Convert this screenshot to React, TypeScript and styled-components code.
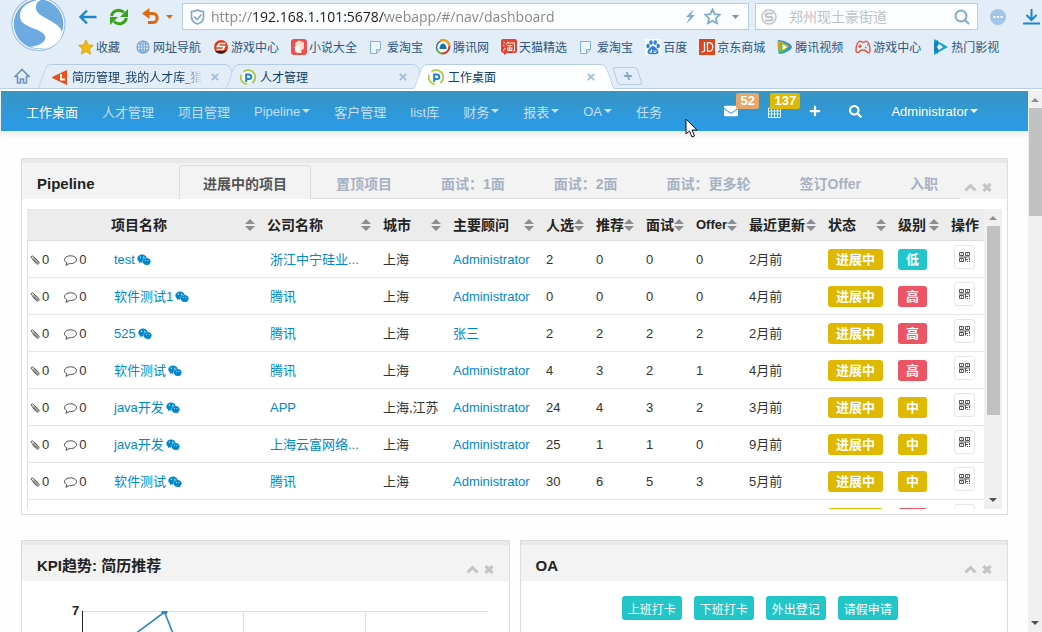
import React from "react";
import styled, { createGlobalStyle } from "styled-components";
import { FaEnvelope, FaPlus, FaSearch, FaWeixin } from "react-icons/fa";

const sans = `"Liberation Sans", "Noto Sans CJK SC", sans-serif`;
const chromeFont = `"Open Sans", "Noto Sans CJK SC", sans-serif`;

const GlobalStyle = createGlobalStyle`
  *, *::before, *::after { box-sizing: border-box; }
  html, body { margin: 0; padding: 0; }
  body { font-family: ${sans}; font-size: 13px; color: #333; background: #fefefe; overflow: hidden; }
  button, input { font: inherit; color: inherit; margin: 0; padding: 0; border: 0; background: none; }
  a { text-decoration: none; color: inherit; }
  svg { display: block; flex: none; }
`;

const Window = styled.div`
  display: flex;
  flex-direction: column;
  height: 100vh;
  overflow: hidden;
`;

/* ---------- browser frame ---------- */

const Chrome = styled.header`
  flex: none;
  background: #e3edf8;
  font-family: ${chromeFont};
  font-size: 12px;
  color: #2d567f;
`;

const ChromeTop = styled.div`
  display: grid;
  grid-template-columns: 78px minmax(0, 1fr);
  height: 62px;
`;

const LogoCell = styled.div`
  display: flex;
  align-items: flex-end;
  padding: 0 0 10px 11px;
  overflow: hidden;
`;

const ChromeBars = styled.div`
  min-width: 0;
`;

const Toolbar = styled.div`
  display: flex;
  align-items: center;
  height: 33px;
`;

const ToolButton = styled.button<{ $gap?: number }>`
  display: flex;
  margin-right: ${(p) => p.$gap ?? 0}px;
`;

const Field = styled.label<{ $width?: number }>`
  display: flex;
  align-items: center;
  flex: ${(p) => (p.$width ? `0 1 ${p.$width}px` : "1 1 0")};
  min-width: 0;
  height: 27px;
  padding: 0 7px 0 ${(p) => (p.$width ? 5 : 7)}px;
  margin-left: ${(p) => (p.$width ? 6 : 0)}px;
  border: 1px solid #b7cfe5;
  background: #fcfdfe;
`;

const UrlInput = styled.input`
  flex: 1;
  min-width: 0;
  height: 25px;
  margin-left: 6px;
  outline: none;
  font-size: 14px;
  color: #858585;
  background: linear-gradient(90deg, #858585 41px, #1c1c1c 41px, #1c1c1c 174px, #858585 174px);
  -webkit-background-clip: text;
  background-clip: text;
  -webkit-text-fill-color: transparent;
`;

const SearchInput = styled.input`
  flex: 1;
  min-width: 0;
  margin-left: 12px;
  outline: none;
  font-size: 14px;
  &::placeholder { color: #bcc2c8; opacity: 1; }
`;

const FieldActions = styled.span`
  display: flex;
  align-items: center;
  gap: 8px;
`;

const Extras = styled.div`
  display: flex;
  align-items: center;
  gap: 17px;
  padding: 0 2px 0 12px;
`;

const Bookmarks = styled.nav`
  display: flex;
  align-items: center;
  gap: 12px;
  height: 28px;
  overflow: hidden;
`;

const Bookmark = styled.a`
  display: flex;
  align-items: center;
  gap: 2px;
  flex: none;
  white-space: nowrap;
  &:first-child { margin-right: 3px; }
`;

const TabStrip = styled.div`
  display: flex;
  align-items: flex-end;
  height: 29px;
  padding-left: 14px;
  border-bottom: 2px solid #fdfeff;
  box-shadow: inset 0 -1px 0 #b9cfe6;
`;

const HomeButton = styled.button`
  display: flex;
  align-self: center;
  margin-right: 12px;
`;

const BrowserTab = styled.div<{ $active?: boolean }>`
  position: relative;
  z-index: ${(p) => (p.$active ? 1 : 0)};
  display: flex;
  align-items: center;
  width: 188px;
  height: 25px;
  padding: 0 11px 0 10px;
  color: #143d68;
  &::before,
  &::after {
    content: "";
    position: absolute;
    z-index: -1;
    top: 0;
    bottom: 0;
    border: 1px solid #b3cce4;
    background: ${(p) => (p.$active ? "#fdfeff" : "#e3edf8")};
    border-bottom-color: ${(p) => (p.$active ? "#fdfeff" : "#b9cfe6")};
  }
  &::before {
    left: 0;
    right: 40%;
    border-right: 0;
    border-radius: 5px 0 0 0;
    transform: skewX(-20deg);
  }
  &::after {
    left: 40%;
    right: -4px;
    border-left: 0;
    border-radius: 0 5px 0 0;
    transform: skewX(20deg);
  }
`;

const TabLabel = styled.span<{ $fade?: boolean }>`
  flex: 1;
  margin: 0 9px 0 4px;
  overflow: hidden;
  white-space: nowrap;
  ${(p) => p.$fade && "mask-image: linear-gradient(90deg, #000 85%, transparent);"}
`;

const NewTab = styled.button`
  display: flex;
  align-items: center;
  justify-content: center;
  align-self: center;
  width: 25px;
  height: 18px;
  margin-left: 9px;
  border: 1px solid #b3cce4;
  border-radius: 3px;
  transform: skewX(18deg);
`;

/* ---------- page ---------- */

const Viewport = styled.div`
  display: flex;
  flex: 1;
  min-height: 0;
`;

const Page = styled.main`
  flex: 1;
  min-width: 0;
  padding-left: 1px;
  overflow: hidden;
`;

const NavBar = styled.nav`
  display: flex;
  align-items: center;
  height: 40px;
  padding: 0 50px 0 13px;
  color: #fff;
  background: linear-gradient(#3795c1, #2c9ae3 80%);
  box-shadow: 0 2px 8px rgba(0, 0, 0, 0.12);
`;

const NavLink = styled.a<{ $active?: boolean }>`
  display: flex;
  align-items: center;
  gap: 2px;
  padding: 0 12px;
  white-space: nowrap;
  color: ${(p) => (p.$active ? "#fff" : "#c3dff3")};
`;

const NavTools = styled.div`
  display: flex;
  align-items: center;
  margin-left: auto;
`;

const NavTool = styled.button<{ $gap: number }>`
  position: relative;
  display: flex;
  align-items: center;
  margin-right: ${(p) => p.$gap}px;
`;

const Badge = styled.span<{ $color: string; $left: number }>`
  position: absolute;
  left: ${(p) => p.$left}px;
  bottom: 9px;
  padding: 0 4px;
  border-radius: 2px;
  font-size: 13px;
  font-weight: bold;
  line-height: 16px;
  color: #fff;
  background: ${(p) => p.$color};
`;

const UserMenu = styled.button`
  display: flex;
  align-items: center;
  gap: 2px;
`;

const Content = styled.div`
  display: grid;
  grid-template-columns: minmax(0, 1fr) minmax(0, 1fr);
  gap: 25px 10px;
  padding: 27px 20px 20px;
`;

const Widget = styled.section<{ $wide?: boolean }>`
  grid-column: ${(p) => (p.$wide ? "1 / -1" : "auto")};
  border: 1px solid #dcdddd;
  background: #fff;
`;

const WidgetHead = styled.div`
  display: flex;
  align-items: flex-end;
  height: 40px;
  padding: 0 15px;
  border-top: 4px solid #e7eaeb;
  background: #f3f3f3;
`;

const WidgetTitle = styled.h2<{ $width?: number }>`
  flex: ${(p) => (p.$width ? `0 0 ${p.$width}px` : "1")};
  margin: 0;
  padding-bottom: 5px;
  font-size: 15px;
  line-height: 20px;
  font-weight: bold;
  color: #222;
`;

const WidgetTools = styled.div`
  display: flex;
  align-items: center;
  gap: 5px;
  padding-bottom: 7px;
  color: #c4c4c4;
`;

const StageTabs = styled.div`
  display: flex;
  flex: 1;
  gap: 1px;
  min-width: 0;
  height: 34px;
  margin-right: 5px;
  box-shadow: inset 0 -1px 0 #dcdddd;
`;

const StageTab = styled.button<{ $active?: boolean }>`
  flex: none;
  padding: 0 23px;
  border: 1px solid ${(p) => (p.$active ? "#dcdddd" : "transparent")};
  border-bottom: 0;
  border-radius: 4px 4px 0 0;
  font-size: 14px;
  font-weight: bold;
  white-space: nowrap;
  color: ${(p) => (p.$active ? "#555" : "#a7b1c2")};
  background: ${(p) => (p.$active ? "#f3f3f3" : "none")};
`;

const TableArea = styled.div`
  display: flex;
  height: 300px;
  margin: 10px 5px 5px;
  overflow: hidden;
`;

const TableScroll = styled.div`
  flex: 1;
  min-width: 0;
  overflow: hidden;
`;

const Table = styled.table`
  width: 100%;
  table-layout: fixed;
  border-collapse: separate;
  border-spacing: 0;
  box-shadow: inset 1px 0 0 #dfdfdf;
`;

const Th = styled.th`
  height: 32px;
  padding: 0 7px 0 5px;
  border-top: 1px solid #e4e4e4;
  border-bottom: 1px solid #dcdcdc;
  background: #ececec;
  color: #222;
  text-align: left;
  white-space: nowrap;
`;

const ThInner = styled.span<{ $small?: boolean }>`
  display: flex;
  align-items: center;
  justify-content: space-between;
  font-size: ${(p) => (p.$small ? 13 : 14)}px;
  line-height: 18px;
`;

const Td = styled.td<{ $inset?: boolean }>`
  height: 37px;
  padding: 2px 0 0 ${(p) => (p.$inset ? 8 : 5)}px;
  border-bottom: 1px solid #e5e5e5;
  white-space: nowrap;
  line-height: 18px;
`;

const TagTd = styled(Td)`
  padding: 0 0 0 5px;
`;

const ActionTd = styled(Td)`
  padding: 0 0 4px 8px;
`;

const CellLink = styled.a`
  display: inline-flex;
  align-items: center;
  gap: 2px;
  color: #0088cc;
`;

const Counters = styled.div`
  display: flex;
  align-items: center;
  gap: 15px;
  margin-left: -2px;
`;

const Counter = styled.span`
  display: flex;
  align-items: center;
  gap: 2px;
`;

const Tag = styled.span<{ $color: string }>`
  display: inline-block;
  padding: 0 8px;
  border-radius: 3px;
  font-weight: bold;
  line-height: 21px;
  vertical-align: middle;
  color: #fff;
  background: ${(p) => p.$color};
`;

const QrButton = styled.button`
  display: flex;
  align-items: center;
  justify-content: center;
  width: 21px;
  height: 24px;
  border: 1px solid #e4e6e7;
  border-radius: 3px;
  background: #fff;
`;

const Track = styled.div<{ $width: number }>`
  display: flex;
  flex-direction: column;
  align-items: center;
  flex: 0 0 ${(p) => p.$width}px;
  padding: 7px 0;
  background: #f0f0f0;
`;

const Thumb = styled.div<{ $height: number }>`
  width: 13px;
  height: ${(p) => p.$height}px;
  margin: 6px 0 auto;
  background: #c1c1c1;
`;

const ChartBody = styled.div`
  height: 200px;
  overflow: hidden;
`;

const ButtonRow = styled.div`
  display: flex;
  justify-content: center;
  gap: 12px;
  padding: 15px 8px 15px 0;
`;

const PunchButton = styled.button`
  height: 24px;
  padding: 0 6px;
  border-radius: 3px;
  font-size: 12px;
  color: #fff;
  background: #23c6c8;
`;

const Pointer = styled.svg`
  position: absolute;
  left: 685px;
  top: 118px;
  z-index: 5;
`;

/* ---------- icons ---------- */

const Logo = () => (
  <svg width="56" height="56" viewBox="0 0 56 56">
    <circle cx="27.500" cy="28" r="26.500" fill="#fff" stroke="#9fc3e3" strokeWidth="1.200" />
    <circle cx="27.500" cy="28" r="24.800" fill="#6eaae2" />
    <path
      d="M33 3C20 4 8 10 9 21c1 11 22 11 25 19 2 6-6 10-15 11 18 4 30-2 32-13 1-12-25-16-26-25-1-6 3-9 8-10z"
      fill="#fff"
    />
  </svg>
);

const ArrowUp = () => (
  <svg width="8" height="4" viewBox="0 0 8 4"><path d="M0 4 4 0l4 4z" fill="#8d8d8d" /></svg>
);
const ArrowDown = () => (
  <svg width="8" height="4" viewBox="0 0 8 4"><path d="M0 0h8L4 4z" fill="#505050" /></svg>
);
const Caret = () => (
  <svg width="8" height="4" viewBox="0 0 8 4"><path d="M0 0h8L4 4z" fill="currentColor" /></svg>
);
const SortIcon = () => (
  <svg width="10" height="12" viewBox="0 0 10 12">
    <path d="M0 5 5 0l5 5zM0 7h10l-5 5z" fill="#8b8d90" />
  </svg>
);
const CloseX = () => (
  <svg width="8" height="8" viewBox="0 0 8 8">
    <path d="M.8.8l6.400 6.400M7.200.8.8 7.200" stroke="#9fbfdd" strokeWidth="1.800" />
  </svg>
);
const GridIcon = () => (
  <svg width="13" height="13" viewBox="0 0 13 13">
    <path d="M.5 3h12v9.500H.5zM.5 6h12M.5 9h12M3.500 3v9.500M6.500 3v9.500M9.500 3v9.500M3.500 0v3M9.500 0v3" fill="none" stroke="#e4f1fa" />
  </svg>
);
const CollapseIcon = () => (
  <svg width="13" height="9" viewBox="0 0 13 9">
    <path d="M1.500 7.500l5-5 5 5" fill="none" stroke="currentColor" strokeWidth="3" />
  </svg>
);
const RemoveIcon = () => (
  <svg width="10" height="9" viewBox="0 0 10 9">
    <path d="M1.500 1l7 7M8.500 1l-7 7" fill="none" stroke="currentColor" strokeWidth="3.200" />
  </svg>
);
const ClipIcon = () => (
  <svg width="10" height="10" viewBox="0 0 10 10" fill="none" stroke="#555" strokeLinecap="round">
    <path d="M3.500 3l4 4c.8.8 0 1.600-.8.8L1.500 3C.2 1.700 2 .2 3.200 1.300l5.300 5C10 8 8.300 10.200 6.500 8.700L2.800 5" />
  </svg>
);
const BubbleIcon = () => (
  <svg width="13" height="11" viewBox="0 0 13 11" fill="none" stroke="#444">
    <path d="M6.500.8c3.300 0 6 1.700 6 3.900s-2.700 3.900-6 3.900l-1.200-.1C4.300 9.500 3 10 1.800 10.200c.6-.6 1-1.300 1.100-2.300C1.400 7.200.5 6 .5 4.700.5 2.500 3.200.8 6.500.8z" />
  </svg>
);
const QrIcon = () => (
  <svg width="11" height="10" viewBox="0 0 11 10" fill="none" stroke="#555">
    <path d="M.5.5h4v3h-4zM6.500.5h4v3h-4zM.5 6.500h4v3h-4zM0 5h11M2 2h1M8 2h1M2 8h1M6.500 5v4.500M6 7.500h3M10.500 6v2M8 9.500h1M10 9.500h1" />
  </svg>
);

const icon16 = { width: 16, height: 16, viewBox: "0 0 16 16" };

const StarIcon = () => (
  <svg {...icon16}>
    <path d="M8 1l2.200 4.800 5.100.6-3.800 3.500 1.100 5.200L8 12.500l-4.600 2.600 1.100-5.200L.7 6.400l5.100-.6z" fill="#f0b90e" stroke="#d79d0c" strokeWidth=".8" />
  </svg>
);
const GlobeIcon = () => (
  <svg {...icon16} fill="none" stroke="#7ba4cc" strokeWidth="1.200">
    <circle cx="8" cy="8" r="6" />
    <ellipse cx="8" cy="8" rx="2.800" ry="6" />
    <path d="M8 2v12M2 8h12M3 5h10M3 11h10" />
  </svg>
);
const GameIcon = () => (
  <svg {...icon16}>
    <circle cx="8" cy="8" r="7" fill="#e23c1c" />
    <path d="M2 12c2 3 9 4 12-1l-4 1z" fill="#222" />
    <path d="M12.500 4.500H6.500L4.500 7.500h7l-1.500 3H3.500" fill="none" stroke="#fff" strokeWidth="1.700" />
  </svg>
);
const NovelIcon = () => (
  <svg {...icon16}>
    <rect x="0" y="0" width="16" height="16" rx="3" fill="#ee4f50" />
    <path d="M4 4l4-2.500 5 2v6l-3 2 1 2.500H6L4 12l1-2z" fill="#fbe3cf" />
    <path d="M3.500 7.500l5-1V13h-4z" fill="#fff" />
  </svg>
);
const DocIcon = () => (
  <svg {...icon16}>
    <path d="M1.500 2.500h10v8l-4 4h-6zM11.500 10.500h-4v4" fill="#edf5fc" stroke="#7fb2de" />
  </svg>
);
const TencentIcon = () => (
  <svg {...icon16} fill="none">
    <circle cx="8" cy="8" r="6" fill="#f4f9fc" />
    <path d="M2.500 11.500A6.500 6.500 0 0 1 6 2" stroke="#3a6f9c" strokeWidth="1.500" />
    <path d="M5 1.800a6.500 6.500 0 0 1 9.500 5" stroke="#e8a01c" strokeWidth="2.400" />
    <path d="M14.500 7c0 5-4 8-8 7.300" stroke="#cf3b2b" strokeWidth="2" />
    <path d="M2 10.500c1 2.500 3 4 5.500 4" stroke="#6aa83b" strokeWidth="2" />
    <path d="M8 4.500c2 0 3.500 3 3.500 5.500h-7c0-2.500 1.500-5.500 3.500-5.500z" fill="#1b6fae" />
  </svg>
);
const TaoIcon = () => (
  <svg {...icon16}>
    <path d="M2 0h12a2 2 0 0 1 2 2v10a2 2 0 0 1-2 2H6l-3 2v-2a3 3 0 0 1-3-2V2a2 2 0 0 1 2-2z" fill="#e8412f" />
    <path d="M2.500 3l1.500 1M2 6l1.500 1M2.200 12l2-3M7 2.500 5.500 5.500M6.500 4h7v8h-1.500M6.500 6.500h5M6 9h5.500M8.800 6.500v5M6.800 9.500v2h4v-2" fill="none" stroke="#fff" />
  </svg>
);
const PawIcon = () => (
  <svg {...icon16}>
    <rect width="16" height="16" fill="#f8fbfe" />
    <g fill="#2a80d4">
      <ellipse cx="3" cy="7" rx="1.700" ry="2.200" />
      <ellipse cx="6" cy="3.500" rx="1.700" ry="2.300" />
      <ellipse cx="10.200" cy="3.500" rx="1.700" ry="2.300" />
      <ellipse cx="13.200" cy="7" rx="1.700" ry="2.200" />
      <path d="M8 7c2 0 5.500 4 5.500 6.300 0 2.200-3 2-5.500 2s-5.500.2-5.500-2C2.500 11 6 7 8 7z" />
    </g>
    <path d="M6.500 10v3.500H5V12h1.500M9 11v2.500h2V11" fill="none" stroke="#f8fbfe" strokeWidth=".8" />
  </svg>
);
const JdIcon = () => (
  <svg {...icon16}>
    <rect width="16" height="16" fill="#e2431e" />
    <path d="M5.500 3v8c0 1.500-1 2-3 1.700M8.500 3.600v8.800h1.500c5 0 5-8.800 0-8.800z" fill="none" stroke="#fff" strokeWidth="1.300" />
  </svg>
);
const VideoIcon = () => (
  <svg {...icon16}>
    <path d="M1 1c5-.5 14 4 14 7s-9 7.500-13 7C.5 12 .5 4 1 1z" fill="#2b95dc" />
    <path d="M1 2c3 0 9 3 11 5.500C9 11 5 13 2 13 1 10 .5 5 1 2z" fill="#f29c1f" />
    <path d="M3 3c3 1 7 3 8.500 5C9 11 6 13 3.500 14 2 11 2 6 3 3z" fill="#74bd2b" />
    <path d="M5.500 5l5 3-5 3z" fill="#fff" />
  </svg>
);
const PadIcon = () => (
  <svg {...icon16} fill="none" stroke="#e5563f" strokeWidth="1.400">
    <path d="M4 2.500c1.500-1 2 .7 4 .7s2.500-1.700 4-.7c2 1.300 3 6 3 9s-2.500 2.500-4 .5c-1-1.300-5-1.300-6 0-1.500 2-4 2.500-4-.5s1-7.700 3-9z" />
    <path d="M5 5.500v3.500M3.300 7.200h3.400M10 8.500h1.500M12 6h1.200" />
  </svg>
);
const FilmIcon = () => (
  <svg {...icon16}>
    <path d="M1 0l14 8-14 8z" fill="#18a3d0" />
    <path d="M1 4v8l4 3V1z" fill="#1583bd" />
    <path d="M6 5l4 3-4 3-2-3z" fill="#fff" />
  </svg>
);
const LiepinIcon = () => (
  <svg {...icon16}>
    <path d="M15 1v15L1 9.500C0 9 0 8 1 7.500z" fill="#e8501c" />
    <path d="M9 5v5.500h4" fill="none" stroke="#fff" strokeWidth="1.800" />
  </svg>
);
const PIcon = () => (
  <svg {...icon16} fill="none">
    <circle cx="8" cy="8" r="5.500" fill="#fff" />
    <path d="M7 15.200A7 7 0 0 1 1 6" stroke="#a8cd34" strokeWidth="1.600" />
    <path d="M3.500 2.500a7.200 7.200 0 0 1 9 11.500" stroke="#a3c72f" strokeWidth="1.600" />
    <path d="M6.200 13V5.500H9a2.300 2.300 0 0 1 0 4.600H6.500" stroke="#1d84c9" strokeWidth="2" />
  </svg>
);

/* ---------- data ---------- */

const bookmarks: [React.ComponentType, string][] = [
  [StarIcon, "收藏"],
  [GlobeIcon, "网址导航"],
  [GameIcon, "游戏中心"],
  [NovelIcon, "小说大全"],
  [DocIcon, "爱淘宝"],
  [TencentIcon, "腾讯网"],
  [TaoIcon, "天猫精选"],
  [DocIcon, "爱淘宝"],
  [PawIcon, "百度"],
  [JdIcon, "京东商城"],
  [VideoIcon, "腾讯视频"],
  [PadIcon, "游戏中心"],
  [FilmIcon, "热门影视"],
];

const navItems: { label: string; menu?: boolean }[] = [
  { label: "工作桌面" },
  { label: "人才管理" },
  { label: "项目管理" },
  { label: "Pipeline", menu: true },
  { label: "客户管理" },
  { label: "list库" },
  { label: "财务", menu: true },
  { label: "报表", menu: true },
  { label: "OA", menu: true },
  { label: "任务" },
];

const stages = ["进展中的项目", "置顶项目", "面试：1面", "面试：2面", "面试：更多轮", "签订Offer", "入职"];

const columns: { label: string; width?: number; sort?: boolean }[] = [
  { label: "", width: 79 },
  { label: "项目名称", sort: true },
  { label: "公司名称", width: 116, sort: true },
  { label: "城市", width: 70, sort: true },
  { label: "主要顾问", width: 93, sort: true },
  { label: "人选", width: 50, sort: true },
  { label: "推荐", width: 50, sort: true },
  { label: "面试", width: 50, sort: true },
  { label: "Offer", width: 53, sort: true },
  { label: "最近更新", width: 79, sort: true },
  { label: "状态", width: 70, sort: true },
  { label: "级别", width: 53, sort: true },
  { label: "操作", width: 38 },
];

const levelColor: Record<string, string> = { 低: "#23c6c8", 中: "#deb900", 高: "#ed5565" };

const rows = [
  ["test", "浙江中宁硅业...", "上海", "Administrator", "2", "0", "0", "0", "2月前", "低"],
  ["软件测试1", "腾讯", "上海", "Administrator", "0", "0", "0", "0", "4月前", "高"],
  ["525", "腾讯", "上海", "张三", "2", "2", "2", "2", "2月前", "高"],
  ["软件测试", "腾讯", "上海", "Administrator", "4", "3", "2", "1", "4月前", "高"],
  ["java开发", "APP", "上海,江苏", "Administrator", "24", "4", "3", "2", "3月前", "中"],
  ["java开发", "上海云富网络...", "上海", "Administrator", "25", "1", "1", "0", "9月前", "中"],
  ["软件测试", "腾讯", "上海", "Administrator", "30", "6", "5", "3", "5月前", "中"],
  ["", "", "", "", "", "", "", "", "", "高"],
];

const Controls = () => (
  <WidgetTools>
    <ToolButton aria-label="收起"><CollapseIcon /></ToolButton>
    <ToolButton aria-label="关闭"><RemoveIcon /></ToolButton>
  </WidgetTools>
);

const ProjectTable = () => (
  <Table>
    <colgroup>
      {columns.map((c, i) => (
        <col key={i} width={c.width} />
      ))}
    </colgroup>
    <thead>
      <tr>
        {columns.map((c, i) => (
          <Th key={i}>
            <ThInner $small={c.label === "Offer"}>
              {c.label}
              {c.sort && <SortIcon />}
            </ThInner>
          </Th>
        ))}
      </tr>
    </thead>
    <tbody>
      {rows.map(([name, company, city, owner, n1, n2, n3, n4, updated, level], i) => (
        <tr key={i}>
          <Td>
            {name && (
              <Counters>
                <Counter><ClipIcon />0</Counter>
                <Counter><BubbleIcon />0</Counter>
              </Counters>
            )}
          </Td>
          <Td $inset>{name && <CellLink href="#">{name}<FaWeixin size={14} /></CellLink>}</Td>
          <Td $inset>{company && <CellLink href="#">{company}</CellLink>}</Td>
          <Td>{city}</Td>
          <Td>{owner && <CellLink href="#">{owner}</CellLink>}</Td>
          <Td>{n1}</Td>
          <Td>{n2}</Td>
          <Td>{n3}</Td>
          <Td>{n4}</Td>
          <Td>{updated}</Td>
          <TagTd><Tag $color="#deb900">进展中</Tag></TagTd>
          <TagTd><Tag $color={levelColor[level]}>{level}</Tag></TagTd>
          <ActionTd><QrButton aria-label="二维码"><QrIcon /></QrButton></ActionTd>
        </tr>
      ))}
    </tbody>
  </Table>
);

const BrowserFrame = () => (
  <Chrome>
    <ChromeTop>
      <LogoCell><Logo /></LogoCell>
      <ChromeBars>
        <Toolbar>
          <ToolButton aria-label="后退" $gap={11}>
            <svg width="19" height="16" viewBox="0 0 19 16"><path d="M18.500 8H2.500M9 1.500 2.500 8 9 14.500" fill="none" stroke="#1c86cc" strokeWidth="2.400" /></svg>
          </ToolButton>
          <ToolButton aria-label="刷新" $gap={12}>
            <svg width="22" height="18" viewBox="0 0 22 18">
              <path d="M3.500 8C4.500 3 11 0 16 4.500M18.500 10C17.500 15 11 18 6 13.500" fill="none" stroke="#36a317" strokeWidth="3" />
              <path d="M20 1v8h-8zM2 17V9h8z" fill="#36a317" />
            </svg>
          </ToolButton>
          <ToolButton aria-label="撤销" $gap={6}>
            <svg width="18" height="18" viewBox="0 0 18 18">
              <path d="M4 5.500h7c5.500 0 5.500 9 0 9H6" fill="none" stroke="#dd6a10" strokeWidth="3" />
              <path d="M7.500 0v11L0 5.500z" fill="#dd6a10" />
            </svg>
          </ToolButton>
          <ToolButton aria-label="更多" $gap={9}>
            <svg width="7" height="4" viewBox="0 0 7 4"><path d="M0 0h7L3.500 4z" fill="#dd6a10" /></svg>
          </ToolButton>
          <Field>
            <svg width="15" height="16" viewBox="0 0 15 16" fill="none" stroke="#80a9cd" strokeWidth="1.700">
              <path d="M7.500 1c2 1.500 4 1.500 6 1.500V8c0 4-3 6-6 7-3-1-6-3-6-7V2.500c2 0 4 0 6-1.500z" />
              <path d="M4 7.500 7 10.500 11.500 5.500" />
            </svg>
            <UrlInput aria-label="网址" defaultValue="http://192.168.1.101:5678/webapp/#/nav/dashboard" />
            <FieldActions>
              <svg width="11" height="15" viewBox="0 0 11 15"><path d="M9 0 1 8h4l-4 7 9-9H6z" fill="#80a9cd" /></svg>
              <svg width="17" height="17" viewBox="0 0 17 17"><path d="M8.500 1.500l2.200 4.700 5 .6-3.700 3.400 1 5-4.500-2.500L4 15.200l1-5L1.300 6.800l5-.6z" fill="none" stroke="#80a9cd" strokeWidth="1.800" /></svg>
              <svg width="12" height="4" viewBox="0 0 12 4"><path d="M3 0h7L6.500 4z" fill="#7096bb" /></svg>
            </FieldActions>
          </Field>
          <Field $width={223}>
            <svg {...icon16} fill="none" stroke="#c1c4c7">
              <circle cx="8" cy="8" r="7" strokeWidth="1.500" />
              <path d="M12 4.500H6.500C4 4.500 4 8 6.500 8h3c2.500 0 2.500 3.500 0 3.500H4" strokeWidth="2" />
            </svg>
            <SearchInput aria-label="搜索" placeholder="郑州现土豪街道" />
            <svg width="16" height="16" viewBox="0 0 16 16" fill="none" stroke="#80a9cd" strokeWidth="2"><circle cx="7" cy="7" r="5.500" /><path d="M11 11l4 4" /></svg>
          </Field>
          <Extras>
            <ToolButton aria-label="扩展">
              <svg {...icon16}><circle cx="8" cy="8" r="8" fill="#a3c4e4" /><path d="M3.500 7h2v2h-2zM7 7h2v2H7zM10.500 7h2v2h-2z" fill="#fff" /></svg>
            </ToolButton>
            <ToolButton aria-label="下载">
              <svg width="17" height="17" viewBox="0 0 17 17"><path d="M8.500 1v11M3.500 7l5 5 5-5M0 15.500h17" fill="none" stroke="#1c86cc" strokeWidth="2" /></svg>
            </ToolButton>
          </Extras>
        </Toolbar>
        <Bookmarks>
          {bookmarks.map(([Icon, label], i) => (
            <Bookmark href="#" key={i}><Icon />{label}</Bookmark>
          ))}
        </Bookmarks>
      </ChromeBars>
    </ChromeTop>
    <TabStrip>
      <HomeButton aria-label="主页">
        <svg width="16" height="16" viewBox="0 0 16 16" fill="none" stroke="#7095b9" strokeWidth="1.600"><path d="M1 8.500 8 1.500l7 7h-2.500V15H9.500v-4h-3v4h-3V8.500z" /></svg>
      </HomeButton>
      <BrowserTab><LiepinIcon /><TabLabel $fade>简历管理_我的人才库_猎</TabLabel><ToolButton aria-label="关闭标签"><CloseX /></ToolButton></BrowserTab>
      <BrowserTab><PIcon /><TabLabel>人才管理</TabLabel><ToolButton aria-label="关闭标签"><CloseX /></ToolButton></BrowserTab>
      <BrowserTab $active><PIcon /><TabLabel>工作桌面</TabLabel><ToolButton aria-label="关闭标签"><CloseX /></ToolButton></BrowserTab>
      <NewTab aria-label="新标签">
        <svg width="8" height="8" viewBox="0 0 8 8"><path d="M4 0v8M0 4h8" stroke="#80a9cd" strokeWidth="2" /></svg>
      </NewTab>
    </TabStrip>
  </Chrome>
);

export default function App() {
  return (
    <Window>
      <GlobalStyle />
      <BrowserFrame />
      <Viewport>
        <Page>
          <NavBar>
            {navItems.map((n, i) => (
              <NavLink href="#" key={n.label} $active={i === 0}>
                {n.label}
                {n.menu && <Caret />}
              </NavLink>
            ))}
            <NavTools>
              <NavTool aria-label="邮件" $gap={30}><FaEnvelope size={14} /><Badge $color="#e8a768" $left={12}>52</Badge></NavTool>
              <NavTool aria-label="日程" $gap={28}><GridIcon /><Badge $color="#deb900" $left={2}>137</Badge></NavTool>
              <NavTool aria-label="新建" $gap={28}><FaPlus size={12} /></NavTool>
              <NavTool aria-label="搜索" $gap={29}><FaSearch size={13} /></NavTool>
              <UserMenu>Administrator<Caret /></UserMenu>
            </NavTools>
          </NavBar>
          <Content>
            <Widget $wide>
              <WidgetHead>
                <WidgetTitle $width={142}>Pipeline</WidgetTitle>
                <StageTabs>
                  {stages.map((s, i) => (
                    <StageTab key={s} $active={i === 0}>{s}</StageTab>
                  ))}
                </StageTabs>
                <Controls />
              </WidgetHead>
              <TableArea>
                <TableScroll><ProjectTable /></TableScroll>
                <Track $width={18}><ArrowUp /><Thumb $height={189} /><ArrowDown /></Track>
              </TableArea>
            </Widget>
            <Widget>
              <WidgetHead>
                <WidgetTitle>KPI趋势: 简历推荐</WidgetTitle>
                <Controls />
              </WidgetHead>
              <ChartBody>
                <svg width="487" height="200" viewBox="0 0 487 200">
                  <path d="M61 30.500h405M221.500 30v170M343.500 30v170" stroke="#e0e0e0" fill="none" />
                  <path d="M60.500 30v170" stroke="#222" />
                  <path d="M61 92 142.500 31 180 126" fill="none" stroke="#2a87c8" strokeWidth="1.600" />
                  <path d="M139.500 30h6v2l-1 1h-4l-1-1z" fill="#2a87c8" />
                  <text x="50" y="34" fontSize="13" fontWeight="bold" fill="#222">7</text>
                </svg>
              </ChartBody>
            </Widget>
            <Widget>
              <WidgetHead>
                <WidgetTitle>OA</WidgetTitle>
                <Controls />
              </WidgetHead>
              <ButtonRow>
                <PunchButton>上班打卡</PunchButton>
                <PunchButton>下班打卡</PunchButton>
                <PunchButton>外出登记</PunchButton>
                <PunchButton>请假申请</PunchButton>
              </ButtonRow>
            </Widget>
          </Content>
        </Page>
        <Track $width={14}><ArrowUp /><Thumb $height={108} /><ArrowDown /></Track>
      </Viewport>
      <Pointer width="14" height="21" viewBox="0 0 14 21">
        <path d="M1 1v15l3.500-3 2.500 6 2.500-1-2.500-6H12z" fill="#fff" stroke="#111" />
      </Pointer>
    </Window>
  );
}
